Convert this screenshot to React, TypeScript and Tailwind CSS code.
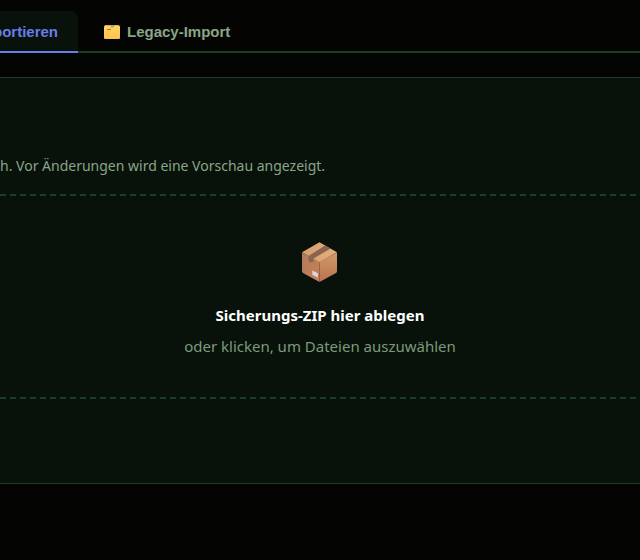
import React from "react";

function DividerIcon() {
  return (
    <svg viewBox="0 0 16 14" className="h-3.5 w-4" aria-hidden="true">
      <defs>
        <linearGradient id="divider" x1="0" y1="0" x2="0" y2="1">
          <stop offset="0" stopColor="#ffd95a" />
          <stop offset="1" stopColor="#ffc04f" />
        </linearGradient>
      </defs>
      <rect x="0.5" y="0" width="15" height="4" rx="1" fill="#e2b04a" />
      <rect x="0" y="1" width="16" height="13" rx="1.2" fill="url(#divider)" />
      <path d="M6 2.500 7.500.5H10v2Z" fill="#a5a77c" />
      <rect x="7" y="0" width="3" height="1" fill="#8fa596" />
      <rect x="3" y="4" width="4" height="1" rx="0.5" fill="#f0524f" />
    </svg>
  );
}

function PackageIcon() {
  return (
    <svg viewBox="0 0 36 40" className="h-10 w-9" aria-hidden="true">
      <defs>
        <linearGradient id="boxLeft" x1="0" y1="0" x2="1" y2="1">
          <stop offset="0" stopColor="#b27c59" />
          <stop offset="1" stopColor="#c58157" />
        </linearGradient>
        <linearGradient id="boxRight" x1="0" y1="0" x2="0" y2="1">
          <stop offset="0" stopColor="#d39a6a" />
          <stop offset="1" stopColor="#b87350" />
        </linearGradient>
        <linearGradient id="boxTop" x1="0" y1="0" x2="1" y2="0">
          <stop offset="0" stopColor="#d3a06f" />
          <stop offset="1" stopColor="#e0b07c" />
        </linearGradient>
      </defs>
      <path d="M0 10.500 17.500 20v20L1 31q-1-.5-1-2Z" fill="url(#boxLeft)" />
      <path d="M35 10.500V29q0 1.500-1 2L17.500 40V20Z" fill="url(#boxRight)" />
      <path d="M17.500 .3 35 10.300 17.500 20.300 0 10.300Z" fill="url(#boxTop)" />
      <path d="M23 3.500 28.500 6.500 11.500 16.500 6.500 14Z" fill="#8e6050" />
      <path d="M6.500 14 11.500 16.500V20.500L10 19.800 9 20.500 6.500 19Z" fill="#8a6254" />
      <path d="m10.300 28.500 5.500 2.700v4.300l-5.500-2.700Z" fill="#e3d3e6" />
    </svg>
  );
}

export default function App() {
  return (
    <div className="min-h-screen overflow-hidden bg-[#040503] pt-[11px] font-['Noto_Sans','Open_Sans',sans-serif] text-[#8aa588]">
      <div
        role="tablist"
        className="flex gap-[5px] border-b-2 border-[#1a3d24] font-['Liberation_Sans',Arial,sans-serif] text-[15px] leading-5 font-bold"
      >
        <button
          role="tab"
          aria-selected="true"
          className="-mb-0.5 flex h-[42px] w-[78px] items-center justify-end overflow-hidden rounded-tr-lg border-b-2 border-[#667eea] bg-[#08120a] pt-0.5 pr-5 text-[#667eea]"
        >
          portieren
        </button>
        <button role="tab" aria-selected="false" className="flex h-10 items-center gap-[7px] px-5 pl-[21px] pt-0.5">
          <DividerIcon />
          Legacy-Import
        </button>
      </div>

      <main className="mt-6 border-y border-[#1a3d24] bg-[#08120a] pt-[78px] pb-[84px]">
        <p className="text-[14px] leading-5 whitespace-nowrap">h. Vor Änderungen wird eine Vorschau angezeigt.</p>
        <div className="mt-[18px] -mr-1.5 border-y-2 border-dashed border-[#1a3d24] pr-1.5">
          <button className="flex w-full flex-col items-center pt-[46px] pb-[39px]">
            <PackageIcon />
            <span className="mt-[21px] text-[15px] leading-6 font-bold text-white">Sicherungs-ZIP hier ablegen</span>
            <span className="mt-[7px] text-[15px] leading-6 text-[#7d997c]">oder klicken, um Dateien auszuwählen</span>
          </button>
        </div>
      </main>
    </div>
  );
}
